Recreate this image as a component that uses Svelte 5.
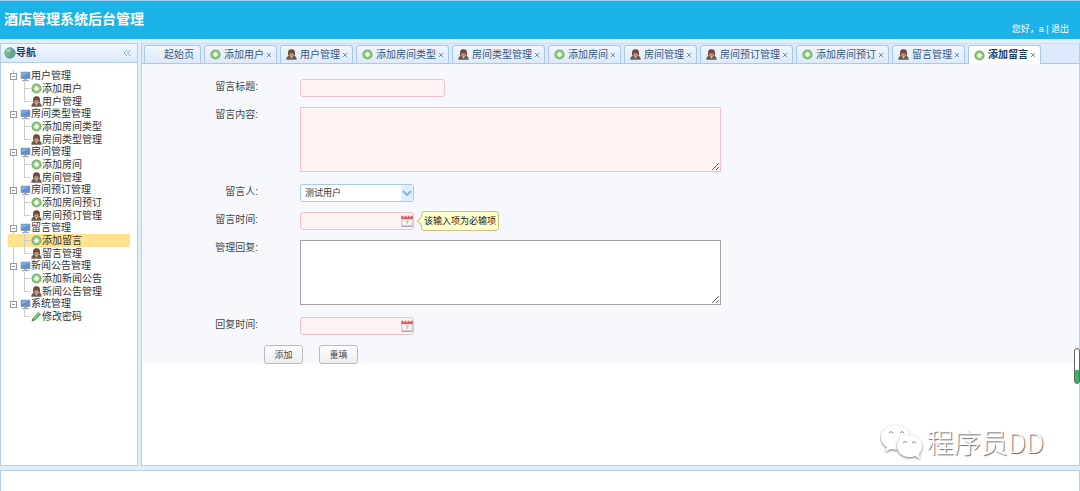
<script lang="ts">
  type Leaf = { label: string; icon: string };
  type Group = { label: string; open: boolean; items: Leaf[] };

  let groups: Group[] = $state([
    {
      label: "用户管理",
      open: true,
      items: [
        { label: "添加用户", icon: "add" },
        { label: "用户管理", icon: "user" },
      ],
    },
    {
      label: "房间类型管理",
      open: true,
      items: [
        { label: "添加房间类型", icon: "add" },
        { label: "房间类型管理", icon: "user" },
      ],
    },
    {
      label: "房间管理",
      open: true,
      items: [
        { label: "添加房间", icon: "add" },
        { label: "房间管理", icon: "user" },
      ],
    },
    {
      label: "房间预订管理",
      open: true,
      items: [
        { label: "添加房间预订", icon: "add" },
        { label: "房间预订管理", icon: "user" },
      ],
    },
    {
      label: "留言管理",
      open: true,
      items: [
        { label: "添加留言", icon: "add" },
        { label: "留言管理", icon: "user" },
      ],
    },
    {
      label: "新闻公告管理",
      open: true,
      items: [
        { label: "添加新闻公告", icon: "add" },
        { label: "新闻公告管理", icon: "user" },
      ],
    },
    {
      label: "系统管理",
      open: true,
      items: [{ label: "修改密码", icon: "pencil" }],
    },
  ]);

  let tabs: Leaf[] = $state([
    { label: "添加用户", icon: "add" },
    { label: "用户管理", icon: "user" },
    { label: "添加房间类型", icon: "add" },
    { label: "房间类型管理", icon: "user" },
    { label: "添加房间", icon: "add" },
    { label: "房间管理", icon: "user" },
    { label: "房间预订管理", icon: "user" },
    { label: "添加房间预订", icon: "add" },
    { label: "留言管理", icon: "user" },
    { label: "添加留言", icon: "add" },
  ]);

  let active = $state("添加留言");

  function openTab(event: MouseEvent, item: Leaf) {
    event.preventDefault();
    if (!tabs.some((tab) => tab.label === item.label)) {
      tabs.push({ ...item });
    }
    active = item.label;
  }

  function closeTab(label: string) {
    tabs = tabs.filter((tab) => tab.label !== label);
    if (active === label) {
      active = tabs.length ? tabs[tabs.length - 1].label : "起始页";
    }
  }
</script>

{#snippet icon(name: string)}
  <svg class="icon" viewBox="0 0 16 16" aria-hidden="true">
    {#if name === "add"}
      <circle cx="8" cy="8" r="7.4" fill="#74b065" />
      <circle cx="8" cy="8" r="6" fill="#8cc97c" />
      <path d="M8 4.500v7M4.500 8h7" stroke="#fff" stroke-width="2.6" />
    {:else if name === "user"}
      <path d="M0.500 15.500c0-4 2-6 7.500-6s7.500 2 7.500 6z" fill="#6b5d55" />
      <path d="M6 10h4l-2 4z" fill="#d8c6b4" />
      <path d="M3 9.500V5.500a5 5 0 0 1 10 0v4z" fill="#6a4534" />
      <ellipse cx="8" cy="7.500" rx="3" ry="3.200" fill="#c58e6c" />
      <path d="M4 6c1-4 7-4 8 0-3 1-5-1-8 0z" fill="#7b4a38" />
    {:else if name === "computer"}
      <rect x="1" y="1" width="14" height="10.500" rx="1" fill="#8598b5" />
      <rect x="2.500" y="2.500" width="11" height="7.500" fill="#5f8fcd" />
      <path d="M2.500 2.500h11l-11 5z" fill="#82afe2" />
      <path d="M6 11.500h4V13h3v2H3v-2h3z" fill="#a4abb9" />
    {:else if name === "pencil"}
      <path d="M1 15l1.500-5L11 1.500 14.500 5 6 13.500z" fill="#4da345" />
      <path d="M3 11l8.500-8.500 1.500 1.500-8.500 8.500z" fill="#8ad07c" />
      <path d="M1 15l1-3.500L4.500 14z" fill="#506b43" />
    {:else if name === "globe"}
      <circle cx="8" cy="8" r="7.500" fill="#5f98c9" />
      <path d="M2 4c3-4 7-4 9-3 0 3-3 3-3 5s2 3 0 5-3 3-4 3c-3-3-4-6-2-10z" fill="#77b978" />
      <path d="M11 5l4 1c1 4-1 7-4 8-1-3 1-4 0-6z" fill="#66ad69" />
      <ellipse cx="6" cy="4.500" rx="3.500" ry="2" fill="#fff" opacity="0.35" />
    {:else if name === "calendar"}
      <rect x="1" y="2" width="14" height="13.500" fill="#f6f3f3" stroke="#b9b4bd" />
      <rect x="0.500" y="1" width="15" height="4.500" fill="#e4545d" />
      <path d="M4 0v3M8 0v3M12 0v3" stroke="#fff" stroke-width="1.500" />
      <path d="M6.500 8h3l-1.500 4" fill="none" stroke="#ee9c91" stroke-width="1.200" />
      <path d="M1 14.800h14" stroke="#9898a4" stroke-width="1.400" />
    {/if}
  </svg>
{/snippet}

<div class="page">
  <header>
    <h1>酒店管理系统后台管理</h1>
    <p>您好，a | <a href="#logout">退出</a></p>
  </header>

  <div class="middle">
    <aside>
      <div class="panelHead">
        {@render icon("globe")}
        <h2>导航</h2>
        <button type="button" class="collapse" aria-label="收起">
          <svg viewBox="0 0 8 8"><path d="M4 1L1 4l3 3M7.500 1l-3 3 3 3" /></svg>
        </button>
      </div>
      <ul class="tree">
        {#each groups as group, i}
          <li class:last={i === groups.length - 1}>
            <div class="parent">
              <button
                type="button"
                class="toggle"
                aria-label={group.label}
                aria-expanded={group.open}
                onclick={() => (group.open = !group.open)}
              >
                <svg viewBox="0 0 7 7">
                  <rect x="0.500" y="0.500" width="6" height="6" />
                  <path d={group.open ? "M2 3.500h3" : "M2 3.500h3M3.500 2v3"} />
                </svg>
              </button>
              {@render icon("computer")}
              <span>{group.label}</span>
            </div>
            {#if group.open}
              <ul>
                {#each group.items as item, j}
                  <li>
                    <a
                      href="#page"
                      class:selected={active === item.label}
                      onclick={(event) => openTab(event, item)}
                    >
                      <i class:end={j === group.items.length - 1}></i>
                      {@render icon(item.icon)}
                      <span>{item.label}</span>
                    </a>
                  </li>
                {/each}
              </ul>
            {/if}
          </li>
        {/each}
      </ul>
    </aside>

    <main>
      <div class="tabs">
        <div class="tab start" class:active={active === "起始页"}>
          <button type="button" onclick={() => (active = "起始页")}>起始页</button>
        </div>
        {#each tabs as tab}
          <div class="tab" class:active={active === tab.label}>
            <button type="button" onclick={() => (active = tab.label)}>
              {@render icon(tab.icon)}
              {tab.label}
            </button>
            <button
              type="button"
              class="close"
              aria-label="关闭{tab.label}"
              onclick={() => closeTab(tab.label)}
            >
              <svg viewBox="0 0 6 6"><path d="M1 1l4 4M5 1L1 5" /></svg>
            </button>
          </div>
        {/each}
      </div>

      <form onsubmit={(event) => event.preventDefault()}>
        <div class="row">
          <label for="title">留言标题:</label>
          <input id="title" class="required wide" type="text" />
        </div>
        <div class="row tall">
          <label for="content">留言内容:</label>
          <textarea id="content" class="required"></textarea>
        </div>
        <div class="row">
          <label for="author">留言人:</label>
          <div class="combo">
            <select id="author">
              <option>测试用户</option>
            </select>
            <svg class="arrow" viewBox="0 0 12 16" aria-hidden="true">
              <path d="M2 6l4 4 4-4" />
            </svg>
          </div>
        </div>
        <div class="row">
          <label for="time">留言时间:</label>
          <div class="combo">
            <input id="time" class="required" type="text" aria-describedby="tip" />
            <button type="button" class="pick" aria-label="选择留言时间">
              {@render icon("calendar")}
            </button>
            <div id="tip" class="tip" role="tooltip">该输入项为必输项</div>
          </div>
        </div>
        <div class="row tall">
          <label for="reply">管理回复:</label>
          <textarea id="reply"></textarea>
        </div>
        <div class="row">
          <label for="replyTime">回复时间:</label>
          <div class="combo">
            <input id="replyTime" class="required" type="text" />
            <button type="button" class="pick" aria-label="选择回复时间">
              {@render icon("calendar")}
            </button>
          </div>
        </div>
        <div class="buttons">
          <button type="submit">添加</button>
          <button type="reset">重填</button>
        </div>
      </form>
    </main>
  </div>

  <footer></footer>

  <div class="gauge"></div>
  <div class="watermark">
    <svg viewBox="0 0 44 38" aria-hidden="true">
      <path
        class="bubble"
        d="M30 11C28 5 22 2 15 2 7 2 1 7 1 14c0 4 2 8 6 10l-2 5 6-3 6 1z"
      />
      <path
        class="bubble"
        d="M42 23c0-6-5-11-13-11s-12 5-12 11 5 11 12 11c2 0 4 0 6-1l5 3-1-5c2-2 3-5 3-8z"
      />
      <path class="eyes" d="M9 10q2-3 4 0M20 10q2-3 4 0M23 20q2-3 4 0M32 20q2-3 4 0" />
    </svg>
    <span>程序员DD</span>
  </div>
</div>

<style>
  :global(body) {
    margin: 0;
  }

  .page {
    position: relative;
    display: flex;
    flex-direction: column;
    box-sizing: border-box;
    min-height: 100vh;
    background: #e0edfb;
    color: #333;
    font: 10px/12px "Liberation Sans", "Noto Sans CJK SC", sans-serif;
  }
  h1,
  h2,
  p,
  ul {
    margin: 0;
    padding: 0;
  }
  ul {
    list-style: none;
  }
  button,
  input,
  select,
  textarea {
    box-sizing: border-box;
    margin: 0;
    padding: 0;
    border: 0;
    background: none;
    color: inherit;
    font: inherit;
  }
  a {
    color: inherit;
    text-decoration: none;
  }
  svg {
    display: block;
  }
  .icon {
    flex: none;
    width: 11px;
    height: 11px;
  }

  header {
    display: flex;
    justify-content: space-between;
    box-sizing: border-box;
    height: 39px;
    padding: 8px 11px 4px 4px;
    border-top: 1px solid #99d3f1;
    background: #1cb3e8;
    color: #fff;
  }
  h1 {
    font-size: 14px;
    line-height: 20px;
  }
  header p {
    align-self: flex-end;
    font-size: 9px;
  }

  .middle {
    display: flex;
    flex: 1;
    gap: 3px;
    margin: 4px 0;
  }
  aside {
    box-sizing: border-box;
    flex: none;
    width: 138px;
    border: 1px solid #b5cfea;
    background: #fff;
  }
  .panelHead {
    display: flex;
    align-items: center;
    box-sizing: border-box;
    height: 19px;
    padding: 0 6px 0 3px;
    border-bottom: 1px solid #b5cfea;
    background: linear-gradient(#f1f7ff, #dceafb);
  }
  .panelHead .icon {
    width: 12px;
    height: 12px;
  }
  h2 {
    flex: 1;
    color: #173b69;
    font-size: 10px;
  }
  .collapse svg {
    width: 8px;
    height: 8px;
    fill: none;
    stroke: #7ca9da;
  }

  .tree {
    padding: 7px;
  }
  .tree > li {
    background: linear-gradient(#ccc, #ccc) 5px 0 / 1px 100% no-repeat;
  }
  .tree > li.last {
    background-size: 1px 6px;
  }
  .parent {
    display: flex;
    align-items: center;
    height: 12px;
    padding-left: 2px;
    white-space: nowrap;
  }
  .toggle {
    margin-right: 3px;
  }
  .toggle svg {
    width: 7px;
    height: 7px;
    fill: #fff;
    stroke: #999;
  }
  .tree a {
    display: flex;
    align-items: center;
    height: 13px;
    padding-left: 16px;
    white-space: nowrap;
  }
  .tree i {
    align-self: stretch;
    width: 7px;
    background:
      linear-gradient(#ccc, #ccc) 0 0 / 1px 100% no-repeat,
      linear-gradient(#ccc, #ccc) 0 6px / 6px 1px no-repeat;
  }
  .tree i.end {
    background-size:
      1px 6px,
      6px 1px;
  }
  .tree .selected {
    background: #ffe28d;
  }

  main {
    flex: 1;
    min-width: 0;
    border: 1px solid #b5cfea;
    border-top-color: #cbdff5;
    background: #fff;
  }
  .tabs {
    display: flex;
    gap: 3px;
    box-sizing: border-box;
    height: 20px;
    padding: 1px 2px 0;
    border-bottom: 1px solid #a9c8ea;
    background: #dceafb;
    color: #35577f;
  }
  .tab {
    display: flex;
    align-items: center;
    flex: none;
    box-sizing: border-box;
    padding: 0 4px 0 5px;
    border: 1px solid #a9c8ea;
    border-bottom: 0;
    border-radius: 3px 3px 0 0;
    background: linear-gradient(#eff6ff, #dceafb);
  }
  .start {
    padding: 0 6px 0 19px;
  }
  .tab button {
    display: flex;
    align-items: center;
    gap: 3px;
    white-space: nowrap;
  }
  .tab.active {
    margin-bottom: -1px;
    background: #fff;
    color: #173b69;
    font-weight: bold;
  }
  .tab .close {
    margin-left: 2px;
  }
  .close svg {
    width: 6px;
    height: 6px;
    fill: none;
    stroke: #7290b3;
  }

  form {
    display: flex;
    flex-direction: column;
    gap: 10px;
    padding: 15px 0 0;
    background: #f7f8fe;
  }
  .row {
    display: grid;
    grid-template-columns: 116px 1fr;
    align-items: start;
    column-gap: 42px;
  }
  .tall {
    padding-bottom: 2px;
  }
  label {
    color: #444;
    line-height: 16px;
    text-align: right;
  }
  input,
  select {
    display: block;
    width: 100%;
    height: 18px;
    padding: 0 4px;
    border: 1px solid #a9c8ea;
    border-radius: 3px;
    background: #fff;
    font-size: 9px;
  }
  select {
    appearance: none;
  }
  .wide {
    width: 145px;
  }
  textarea {
    display: block;
    width: 421px;
    max-width: 100%;
    height: 65px;
    border: 1px solid #a0a0a8;
    background: #fff;
  }
  .required {
    border-color: #f5c0cb;
    background: #fff3f3;
  }
  .combo {
    position: relative;
    width: 114px;
  }
  .arrow {
    position: absolute;
    top: 1px;
    right: 1px;
    width: 12px;
    height: 16px;
    border-radius: 0 2px 2px 0;
    background: #e0effd;
    fill: none;
    stroke: #85b6dd;
    stroke-width: 2;
    pointer-events: none;
  }
  .pick {
    position: absolute;
    top: 3px;
    right: 1px;
  }
  .pick .icon {
    width: 12px;
    height: 12px;
  }
  .tip {
    position: absolute;
    top: -1px;
    left: 121px;
    padding: 3px 2px;
    border: 1px solid #d3c27d;
    border-radius: 3px;
    background: #ffffcc;
    color: #222;
    font-size: 9px;
    white-space: nowrap;
  }
  .tip::before {
    content: "";
    position: absolute;
    top: 6px;
    left: -4px;
    width: 5px;
    height: 5px;
    border: 1px solid #d3c27d;
    border-width: 0 0 1px 1px;
    background: #ffffcc;
    transform: rotate(45deg);
  }
  .buttons {
    display: flex;
    gap: 16px;
    padding-left: 122px;
  }
  .buttons button {
    width: 39px;
    height: 19px;
    border: 1px solid #bbb;
    border-radius: 3px;
    background: linear-gradient(#fff, #eee);
    color: #444;
    font-size: 9px;
  }

  footer {
    box-sizing: border-box;
    height: 21px;
    border: 1px solid #b5cfea;
    border-bottom: 0;
    background: #fff;
  }

  .gauge {
    position: absolute;
    right: 0;
    bottom: 107px;
    box-sizing: border-box;
    width: 6px;
    height: 36px;
    border: 1px solid #666;
    border-radius: 3px;
    background: linear-gradient(#fff 62%, #33b565 62%);
  }
  .watermark {
    position: absolute;
    right: 36px;
    bottom: 29px;
    display: flex;
    align-items: center;
    gap: 3px;
    color: #fff;
    font-family: "Noto Sans CJK SC", sans-serif;
    font-size: 27px;
    font-weight: 300;
    line-height: 40px;
    text-shadow: 1px 1px 1px #666;
    pointer-events: none;
  }
  .watermark svg {
    width: 44px;
    height: 38px;
  }
  .bubble {
    fill: #fff;
    filter: drop-shadow(0 1px 1px #777);
  }
  .eyes {
    fill: none;
    stroke: #888;
  }
</style>
